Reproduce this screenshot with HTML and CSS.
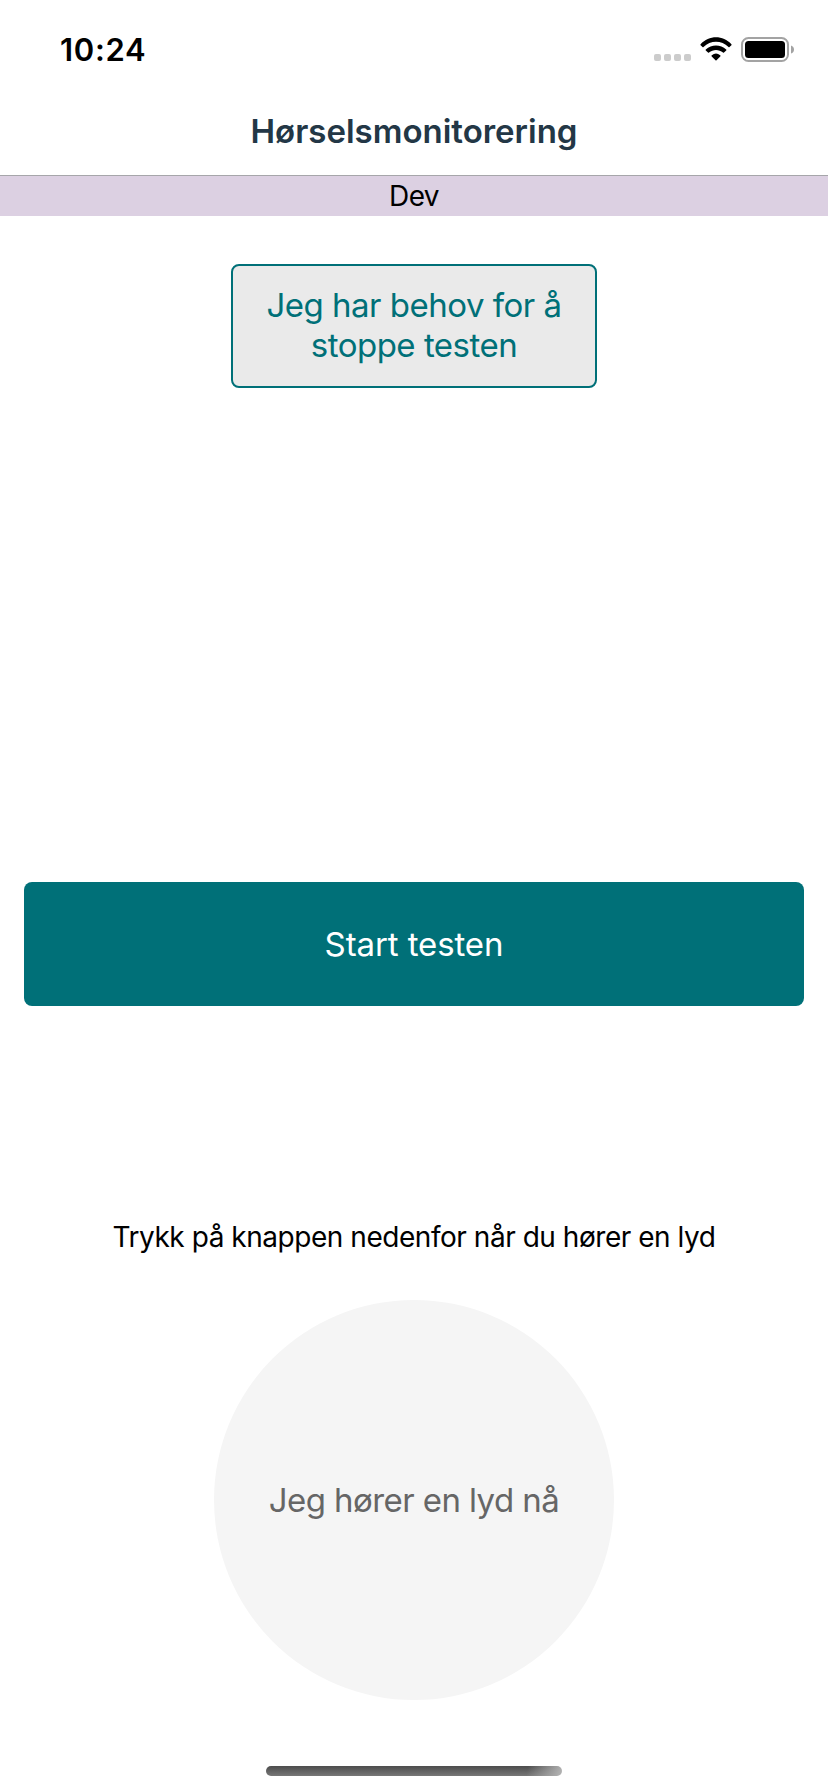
FILE: index.html
```html
<!DOCTYPE html>
<html lang="nb">
<head>
<meta charset="utf-8">
<title>Hørselsmonitorering</title>
<link rel="stylesheet" href="styles.css">
</head>
<body>
<div class="status">
  <span class="time">10:24</span>
  <div class="indicators">
    <div class="signal"><i></i><i></i><i></i><i></i></div>
    <svg class="wifi" width="32" height="24" viewBox="0 0 32 24"><path d="M.6 7.2C9-2.1 23-2.1 31.4 7.2Q31.8 7.7 31.4 8.2L29.5 10Q29 10.4 28.5 10C21.5 3 10.5 3 3.5 10Q3 10.4 2.5 10L.6 8.2Q.2 7.7 .6 7.2Z"/><path d="M5.8 12.5C11.5 7.2 20.5 7.2 26.2 12.5Q26.7 13 26.2 13.5L24 15.6Q23.5 16 23 15.6C19 12 13 12 9 15.6Q8.5 16 8 15.6L5.8 13.5Q5.3 13 5.8 12.5Z"/><path d="M11.8 18.2Q16 15 20.2 18.2Q20.9 18.8 20.3 19.4L16.5 23.2Q16 23.7 15.5 23.2L11.7 19.4Q11.1 18.8 11.8 18.2Z"/></svg>
    <svg class="battery" width="53" height="26" viewBox="0 0 53 26"><rect x="1" y="1" width="46" height="23" rx="6.5" fill="none" stroke="#a3a3a3" stroke-width="2"/><rect x="4" y="4" width="40" height="17" rx="3.5"/><path d="M50 8.5Q53 9.5 53 12.5T50 16.5Z" fill="#a3a3a3"/></svg>
  </div>
</div>
<header class="header"><h1>Hørselsmonitorering</h1></header>
<div class="env">Dev</div>
<main class="content">
  <button class="stop">Jeg har behov for å<br>stoppe testen</button>
  <button class="start">Start testen</button>
  <p class="hint">Trykk på knappen nedenfor når du hører en lyd</p>
  <button class="hear">Jeg hører en lyd nå</button>
</main>
<div class="home"></div>
</body>
</html>
```
FILE: styles.css
```css
* { box-sizing: border-box; }
body { margin: 0; height: 1792px; display: flex; flex-direction: column; align-items: center; overflow: hidden; background: #fff; color: #000; font-family: Inter, sans-serif; }
button { font: inherit; padding: 0; border: 0; }
.status { width: 100%; height: 88px; padding: 37px 34px 0 60px; display: flex; justify-content: space-between; align-items: flex-start; }
.time { font-size: 31px; line-height: 26px; font-weight: 600; letter-spacing: .7px; }
.indicators { display: flex; gap: 9px; }
.signal { display: flex; gap: 3px; padding-top: 17px; }
.signal i { width: 7px; height: 7px; border-radius: 2px; background: #ccc; }
.header { width: 100%; height: 88px; padding-bottom: 2px; border-bottom: 1px solid #a6a6aa; display: flex; align-items: center; justify-content: center; }
h1 { margin: 0; font-size: 33px; line-height: 40px; font-weight: 600; color: #233746; }
.env { width: 100%; height: 40px; line-height: 40px; text-align: center; background: #dcd0e2; font-size: 28px; letter-spacing: -.6px; }
.content { width: 100%; display: flex; flex-direction: column; align-items: center; }
.stop { width: 366px; height: 124px; margin-top: 48px; padding-bottom: 3px; border: 2px solid #007078; border-radius: 8px; background: #eaeaea; color: #007078; font-size: 33px; line-height: 40px; letter-spacing: -.5px; }
.start { width: 780px; height: 124px; margin-top: 494px; padding-bottom: 1px; border-radius: 8px; background: #007078; color: #fff; font-size: 33px; letter-spacing: -.1px; }
.hint { margin: 213px 0 0; font-size: 28px; line-height: 36px; letter-spacing: -.46px; }
.hear { width: 400px; height: 400px; margin-top: 45px; padding-bottom: 1px; border-radius: 50%; background: #f5f5f5; color: #666; font-size: 33px; letter-spacing: -.58px; }
.home { width: 296px; height: 10px; margin-top: 66px; border-radius: 5px; background: linear-gradient(100deg, transparent 88%, #b4b4b4), linear-gradient(#4c4c4c, #777); }
```
